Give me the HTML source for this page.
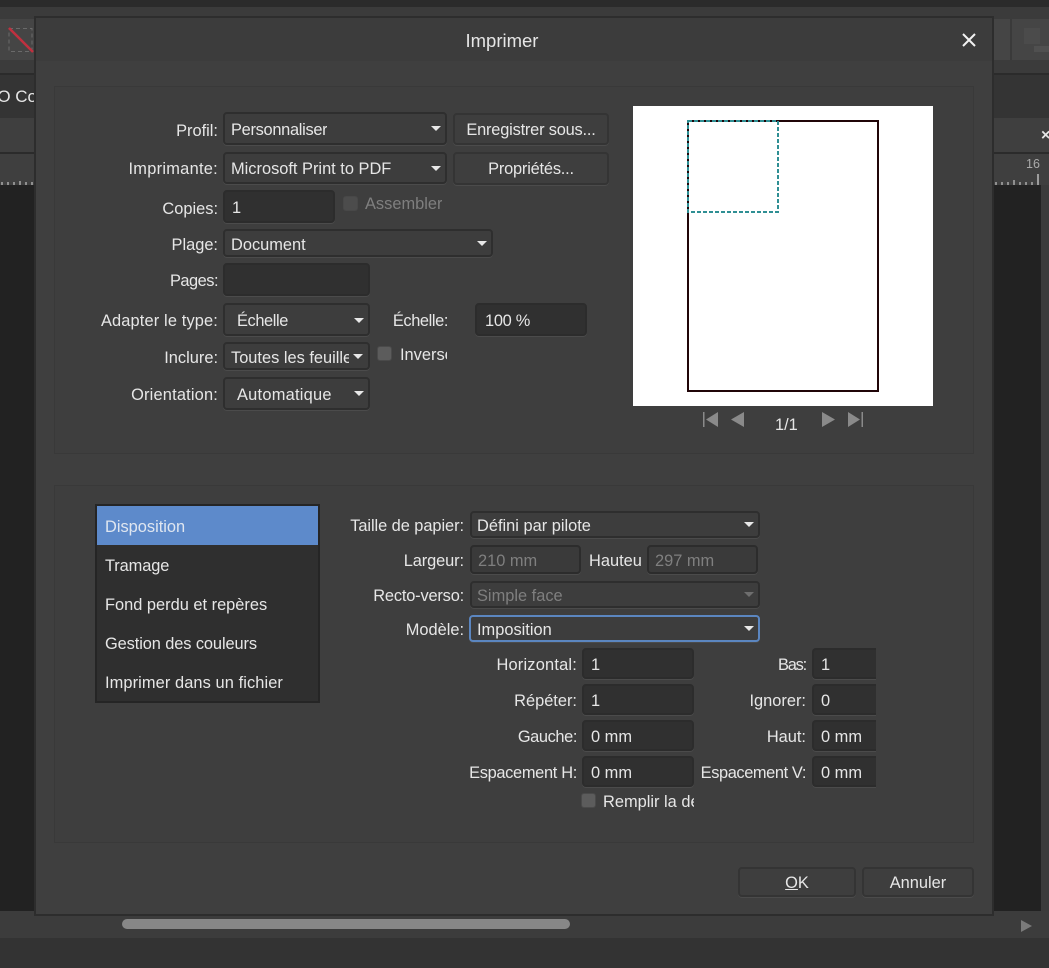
<!DOCTYPE html>
<html lang="fr"><head><meta charset="utf-8"><title>Imprimer</title>
<style>
html,body{margin:0;padding:0}
body{position:relative;width:1049px;height:968px;overflow:hidden;background:#3b3b3b;font-family:"Liberation Sans",sans-serif;font-size:16.4px;color:#e6e6e6}
div,span.a{position:absolute;box-sizing:border-box}
.l{white-space:nowrap;line-height:20px;height:20px;text-align:right;margin-top:1px}
.t{white-space:nowrap;line-height:20px;height:20px;overflow:hidden;margin-top:1px}
.c{background:#3d3d3d;border:2px solid #2e2e2e;border-radius:4px;box-shadow:0 1px 0 #4b4b4b}
.i{background:#303030;border:2px solid #2c2c2c;border-radius:4px;box-shadow:0 1px 0 #4b4b4b}
.b{background:#3e3e3e;border:2px solid #343434;border-radius:4px;box-shadow:0 1px 0 #4b4b4b;text-align:center}
.ar{width:0;height:0;border-left:5px solid transparent;border-right:5px solid transparent;border-top:5px solid #e8e8e8}
.ck{background:#5c5c5c;border:1px solid #4a4a4a;border-radius:3px;width:15px;height:15px}
.g{background:#3e3e3e;border:1px solid #393939}
.d{color:#7f7f7f}
</style></head><body>
<!-- background app -->
<div style="left:0;top:0;width:1049px;height:7px;background:#2b2b2b"></div>
<div style="left:0;top:19px;width:1049px;height:41px;background:#454545"></div>
<div style="left:0;top:73px;width:1049px;height:2px;background:#2b2b2b"></div>
<div style="left:0;top:75px;width:1049px;height:43px;background:#343434"></div>
<div style="left:0;top:118px;width:1049px;height:35px;background:#3f3f3f"></div>
<div style="left:0;top:152px;width:1049px;height:2px;background:#2b2b2b"></div>
<div style="left:0;top:154px;width:1049px;height:31px;background:#3f3f3f"></div>
<div style="left:0;top:185px;width:1041px;height:726px;background:#222"></div>
<div style="left:0;top:911px;width:1049px;height:27px;background:#3c3c3c"></div>
<div style="left:0;top:938px;width:1049px;height:30px;background:#333"></div>
<div class="t" style="left:-14px;top:86px;width:49px;font-size:17px">SO Co</div>
<svg style="position:absolute;left:6px;top:26px" width="29" height="29" viewBox="0 0 29 29"><rect x="3" y="2.500" width="23" height="23" fill="none" stroke="#6a6a6a" stroke-dasharray="4 3"/><path d="M3 2L27 26" stroke="#c0303f" stroke-width="2.500"/></svg>
<svg style="position:absolute;left:0;top:176px" width="35" height="9"><path d="M2 6v3M8 6v3M14 6v3M20 5v4M26 6v3M32 6v3" stroke="#aaa" stroke-width="1.500"/></svg>
<div style="left:1010px;top:19px;width:2px;height:41px;background:#3a3a3a"></div>
<div style="left:1024px;top:28px;width:16px;height:16px;background:#4b4b4b"></div>
<div style="left:1034px;top:46px;width:15px;height:6px;background:#505050"></div>
<div class="t" style="left:1041px;top:125px;width:8px;font-size:16px;font-weight:bold">×</div>
<div class="t" style="left:1026px;top:153px;width:20px;font-size:12.500px;color:#aaa">16</div>
<svg style="position:absolute;left:993px;top:172px" width="48" height="14"><path d="M3 10v3M9 10v3M15 10v3M21 8v5M27 10v3M33 10v3M39 10v3" stroke="#aaa" stroke-width="1.500"/><path d="M45 2v11" stroke="#bbb" stroke-width="1.500"/></svg>
<div style="left:122px;top:919px;width:448px;height:10px;border-radius:5px;background:#878787"></div>
<svg style="position:absolute;left:1021px;top:920px" width="11" height="12"><path d="M0 0L11 6L0 12Z" fill="#7a7a7a"/></svg>

<!-- dialog -->
<div style="left:34px;top:16px;width:960px;height:900px;background:#3f3f3f;border:2px solid #2d2d2d"></div>
<div style="left:36px;top:18px;width:956px;height:43px;background:#3c3c3c"></div>
<div class="l" style="left:402px;width:200px;text-align:center;top:30px;font-size:18.500px">Imprimer</div>
<svg style="position:absolute;left:962px;top:33px" width="14" height="14"><path d="M1 1L13 13M13 1L1 13" stroke="#f2f2f2" stroke-width="2"/></svg>

<div class="g" style="left:54px;top:86px;width:920px;height:368px"></div>
<div class="g" style="left:54px;top:485px;width:920px;height:358px"></div>

<!-- top form -->
<div class="l" style="right:831px;top:120px">Profil:</div>
<div class="l" style="right:831px;top:158px;letter-spacing:.27px">Imprimante:</div>
<div class="l" style="right:831px;top:198px">Copies:</div>
<div class="l" style="right:831px;top:234px">Plage:</div>
<div class="l" style="right:831px;top:270px;letter-spacing:-.5px">Pages:</div>
<div class="l" style="right:831px;top:310px;letter-spacing:.14px">Adapter le type:</div>
<div class="l" style="right:831px;top:347px">Inclure:</div>
<div class="l" style="right:831px;top:384px;letter-spacing:.18px">Orientation:</div>

<div class="c" style="left:223px;top:112px;width:224px;height:33px"></div>
<div class="t" style="left:231px;top:119px;letter-spacing:-.3px">Personnaliser</div>
<div class="ar" style="left:431px;top:126px"></div>
<div class="c" style="left:223px;top:152px;width:224px;height:32px"></div>
<div class="t" style="left:231px;top:158px">Microsoft Print to PDF</div>
<div class="ar" style="left:431px;top:166px"></div>
<div class="b" style="left:453px;top:113px;width:156px;height:32px;line-height:30px;letter-spacing:-.2px">Enregistrer sous...</div>
<div class="b" style="left:453px;top:152px;width:156px;height:33px;line-height:31px;letter-spacing:-.2px">Propriétés...</div>
<div class="i" style="left:223px;top:190px;width:112px;height:33px"></div>
<div class="t" style="left:232px;top:197px">1</div>
<div class="ck" style="left:343px;top:196px;background:#4c4c4c;border-color:#484848"></div>
<div class="t d" style="left:365px;top:193px">Assembler</div>
<div class="c" style="left:223px;top:229px;width:270px;height:28px"></div>
<div class="t" style="left:231px;top:234px">Document</div>
<div class="ar" style="left:477px;top:241px"></div>
<div class="i" style="left:223px;top:263px;width:147px;height:33px"></div>
<div class="c" style="left:223px;top:303px;width:147px;height:33px"></div>
<div class="t" style="left:237px;top:310px;letter-spacing:-.4px">Échelle</div>
<div class="ar" style="left:354px;top:318px"></div>
<div class="l" style="right:601px;top:310px;letter-spacing:-.4px">Échelle:</div>
<div class="i" style="left:475px;top:303px;width:112px;height:33px"></div>
<div class="t" style="left:485px;top:310px;letter-spacing:-.3px">100 %</div>
<div class="c" style="left:223px;top:342px;width:147px;height:28px"></div>
<div class="t" style="left:231px;top:347px;width:118px">Toutes les feuilles</div>
<div class="ar" style="left:353px;top:354px"></div>
<div class="ck" style="left:377px;top:346px"></div>
<div class="t" style="left:400px;top:344px;width:47px">Inverser</div>
<div class="c" style="left:223px;top:377px;width:147px;height:33px"></div>
<div class="t" style="left:237px;top:384px;letter-spacing:.25px">Automatique</div>
<div class="ar" style="left:354px;top:391px"></div>

<!-- preview -->
<div style="left:633px;top:106px;width:300px;height:300px;background:#fff"></div>
<div style="left:687px;top:120px;width:192px;height:272px;border:2px solid #200508"></div>
<svg style="position:absolute;left:686px;top:119px" width="95" height="95"><path d="M2 2H92V93H2Z" fill="none" stroke="#2f8f94" stroke-width="2" stroke-dasharray="4 2"/></svg>
<svg style="position:absolute;left:700px;top:410px" width="166" height="20" viewBox="0 0 166 20" fill="#8a8a8a"><path d="M3 2h1.500v15H3zM6 9.500L18 2V17ZM31 9.500L44 2V17ZM122 2L135 9.500L122 17ZM148 2L160 9.500L148 17ZM161.500 2H163V17H161.500Z"/></svg>
<div class="t" style="left:775px;top:414px">1/1</div>

<!-- list -->
<div style="left:95px;top:504px;width:225px;height:199px;background:#2f2f2f;border:2px solid #252525"></div>
<div style="left:97px;top:506px;width:221px;height:39px;background:#5d8acb"></div>
<div class="t" style="left:105px;top:516px;color:#dfe6f0">Disposition</div>
<div class="t" style="left:105px;top:555px;letter-spacing:-.1px">Tramage</div>
<div class="t" style="left:105px;top:594px">Fond perdu et repères</div>
<div class="t" style="left:105px;top:633px;letter-spacing:-.1px">Gestion des couleurs</div>
<div class="t" style="left:105px;top:672px;letter-spacing:.09px">Imprimer dans un fichier</div>

<!-- layout form -->
<div class="l" style="right:585px;top:515px;letter-spacing:-.06px">Taille de papier:</div>
<div class="l" style="right:585px;top:550px;letter-spacing:-.1px">Largeur:</div>
<div class="l" style="right:585px;top:585px;letter-spacing:-.18px">Recto-verso:</div>
<div class="l" style="right:585px;top:619px">Modèle:</div>

<div class="c" style="left:470px;top:511px;width:290px;height:27px"></div>
<div class="t" style="left:477px;top:515px">Défini par pilote</div>
<div class="ar" style="left:744px;top:522px"></div>
<div class="i" style="left:470px;top:545px;width:111px;height:29px;background:#3a3a3a"></div>
<div class="t d" style="left:478px;top:550px">210 mm</div>
<div class="t" style="left:589px;top:550px;width:52px">Hauteur</div>
<div class="i" style="left:647px;top:545px;width:111px;height:29px;background:#3a3a3a"></div>
<div class="t d" style="left:655px;top:550px">297 mm</div>
<div class="c" style="left:470px;top:581px;width:290px;height:27px"></div>
<div class="t d" style="left:477px;top:585px">Simple face</div>
<div class="ar" style="left:744px;top:592px;border-top-color:#6e6e6e"></div>
<div class="c" style="left:469px;top:615px;width:291px;height:27px;border-color:#5b86c0"></div>
<div class="t" style="left:477px;top:619px">Imposition</div>
<div class="ar" style="left:744px;top:626px"></div>

<div class="l" style="right:472px;top:654px;letter-spacing:.2px">Horizontal:</div>
<div class="l" style="right:472px;top:690px">Répéter:</div>
<div class="l" style="right:472px;top:726px;letter-spacing:-.4px">Gauche:</div>
<div class="l" style="right:472px;top:762px;letter-spacing:-.32px">Espacement H:</div>
<div class="i" style="left:582px;top:648px;width:112px;height:31px"></div>
<div class="i" style="left:582px;top:684px;width:112px;height:31px"></div>
<div class="i" style="left:582px;top:720px;width:112px;height:31px"></div>
<div class="i" style="left:582px;top:756px;width:112px;height:31px"></div>
<div class="t" style="left:591px;top:654px">1</div>
<div class="t" style="left:591px;top:690px">1</div>
<div class="t" style="left:591px;top:726px">0 mm</div>
<div class="t" style="left:591px;top:762px">0 mm</div>

<div class="l" style="right:243px;top:654px;letter-spacing:-1.200px">Bas:</div>
<div class="l" style="right:243px;top:690px">Ignorer:</div>
<div class="l" style="right:243px;top:726px">Haut:</div>
<div class="l" style="right:243px;top:762px;letter-spacing:-.4px">Espacement V:</div>
<div class="i" style="left:812px;top:648px;width:64px;height:31px;border-right:0;border-radius:4px 0 0 4px"></div>
<div class="i" style="left:812px;top:684px;width:64px;height:31px;border-right:0;border-radius:4px 0 0 4px"></div>
<div class="i" style="left:812px;top:720px;width:64px;height:31px;border-right:0;border-radius:4px 0 0 4px"></div>
<div class="i" style="left:812px;top:756px;width:64px;height:31px;border-right:0;border-radius:4px 0 0 4px"></div>
<div class="t" style="left:821px;top:654px">1</div>
<div class="t" style="left:821px;top:690px">0</div>
<div class="t" style="left:821px;top:726px">0 mm</div>
<div class="t" style="left:821px;top:762px">0 mm</div>

<div class="ck" style="left:581px;top:793px"></div>
<div class="t" style="left:603px;top:791px;width:91px">Remplir la des</div>

<div class="b" style="left:738px;top:867px;width:118px;height:30px;line-height:28px"><u>O</u>K</div>
<div class="b" style="left:862px;top:867px;width:112px;height:30px;line-height:28px">Annuler</div>
</body></html>
